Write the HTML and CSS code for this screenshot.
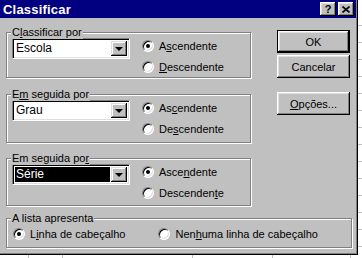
FILE: index.html
```html
<!DOCTYPE html>
<html lang="pt">
<head>
  <meta charset="UTF-8">
  <title>Classificar</title>
  <link rel="stylesheet" href="styles.css">
</head>
<body>
  <div class="dialog">
    <div class="titlebar">
      <span class="title">Classificar</span>
      <div class="title-buttons">
        <span class="tbtn">?</span>
        <span class="tbtn">
          <svg width="8" height="7" viewBox="0 0 8 7"><path d="M0.5 0.5 L7.5 6.5 M7.5 0.5 L0.5 6.5" stroke="#000" stroke-width="1.6" fill="none"/></svg>
        </span>
      </div>
    </div>

    <div class="content">
      <div class="left">
        <div class="group g1">
          <span class="legend">C<u>l</u>assificar por</span>
          <div class="combo"><span class="value">Escola</span><span class="drop"></span></div>
          <div class="radios">
            <label class="opt"><span class="radio checked"></span><span>A<u>s</u>cendente</span></label>
            <label class="opt"><span class="radio"></span><span><u>D</u>escendente</span></label>
          </div>
        </div>

        <div class="group g2">
          <span class="legend">E<u>m</u> seguida por</span>
          <div class="combo"><span class="value">Grau</span><span class="drop"></span></div>
          <div class="radios">
            <label class="opt"><span class="radio checked"></span><span>As<u>c</u>endente</span></label>
            <label class="opt"><span class="radio"></span><span>De<u>s</u>cendente</span></label>
          </div>
        </div>

        <div class="group g3">
          <span class="legend">Em seguida po<u>r</u></span>
          <div class="combo"><span class="value selected">Série</span><span class="drop"></span></div>
          <div class="radios">
            <label class="opt"><span class="radio checked"></span><span>Asce<u>n</u>dente</span></label>
            <label class="opt"><span class="radio"></span><span>Descenden<u>t</u>e</span></label>
          </div>
        </div>
      </div>

      <div class="right">
        <button class="btn default">OK</button>
        <button class="btn">Cancelar</button>
        <button class="btn spaced"><u>O</u>pções...</button>
      </div>
    </div>

    <div class="group g4">
      <span class="legend">A lista apresenta</span>
      <label class="opt"><span class="radio checked"></span><span>L<u>i</u>nha de cabeçalho</span></label>
      <label class="opt second"><span class="radio"></span><span>Nen<u>h</u>uma linha de cabeçalho</span></label>
    </div>
  </div>
</body>
</html>
```

FILE: styles.css
```css
* {
  box-sizing: border-box;
}

html, body {
  margin: 0;
  padding: 0;
}

body {
  width: 362px;
  height: 258px;
  overflow: hidden;
  font-family: 'Liberation Sans', Arial, sans-serif;
  font-size: 11px;
  color: #000;
  background-color: #fff;
  background-image:
    linear-gradient(#c0c0c0, #c0c0c0),
    linear-gradient(#c0c0c0, #c0c0c0),
    linear-gradient(#c0c0c0, #c0c0c0),
    linear-gradient(#c0c0c0, #c0c0c0),
    linear-gradient(#c0c0c0, #c0c0c0),
    repeating-linear-gradient(to bottom, transparent 0, transparent 16px, #c0c0c0 16px, #c0c0c0 17px);
  background-size: 1px 10px, 1px 10px, 1px 10px, 1px 10px, 1px 10px, 10px 258px;
  background-position: 28px 250px, 62px 250px, 192px 250px, 272px 250px, 350px 250px, 358px 9px;
  background-repeat: no-repeat;
}

.dialog {
  width: 358px;
  height: 255px;
  background: #c0c0c0;
  border-right: 1px solid #000;
  border-bottom: 1px solid #000;
  box-shadow: inset -1px -1px 0 #808080;
}

.titlebar {
  height: 18px;
  width: 356px;
  background: #000080;
  color: #fff;
  display: flex;
  align-items: center;
  justify-content: space-between;
  padding: 0 2px 0 3px;
}

.title {
  font-weight: bold;
  font-size: 13px;
  letter-spacing: 0.2px;
}

.title-buttons {
  display: flex;
  gap: 2px;
}

.tbtn {
  display: flex;
  align-items: center;
  justify-content: center;
  width: 16px;
  height: 14px;
  background: #c0c0c0;
  color: #000;
  font-weight: bold;
  font-size: 11px;
  line-height: 14px;
  box-shadow: inset -1px -1px #000, inset 1px 1px #fff, inset -2px -2px #808080, inset 2px 2px #dfdfdf;
}

.content {
  display: flex;
  padding: 14px 0 0 6px;
}

.left {
  width: 245px;
}

.group {
  position: relative;
  border: 1px solid #808080;
  box-shadow: 1px 1px 0 #fff, inset 1px 1px 0 #fff;
  display: flex;
  align-items: flex-start;
}

.legend {
  position: absolute;
  top: -8px;
  left: 4px;
  padding: 0 1px;
  background: #c0c0c0;
  line-height: 14px;
  white-space: nowrap;
}

.g1 {
  height: 46px;
}

.g2 {
  height: 49px;
  margin-top: 16px;
}

.g3 {
  height: 48px;
  margin-top: 15px;
}

.combo {
  width: 118px;
  height: 21px;
  margin: 5px 0 0 5px;
  display: flex;
  align-items: center;
  padding: 2px;
  background: #fff;
  border: 1px solid;
  border-color: #808080 #fff #fff #808080;
  box-shadow: inset 1px 1px #000, inset -1px -1px #dfdfdf;
}

.value {
  flex: 1;
  height: 15px;
  line-height: 15px;
  padding-left: 1px;
  font-size: 12px;
  margin-right: 1px;
}

.value.selected {
  background: #000;
  color: #fff;
}

.drop {
  position: relative;
  width: 16px;
  height: 15px;
  background: #c0c0c0;
  box-shadow: inset -1px -1px #000, inset 1px 1px #dfdfdf, inset -2px -2px #808080, inset 2px 2px #fff;
}

.drop::after {
  content: "";
  position: absolute;
  left: 4px;
  top: 6px;
  border-left: 4px solid transparent;
  border-right: 4px solid transparent;
  border-top: 4px solid #000;
}

.radios {
  display: flex;
  flex-direction: column;
  margin: 4px 0 0 12px;
  gap: 3px;
}

.opt {
  display: flex;
  align-items: center;
  height: 18px;
  gap: 5px;
  white-space: nowrap;
}

.radio {
  position: relative;
  flex: none;
  width: 12px;
  height: 12px;
  border-radius: 50%;
  background: #fff;
  border: 1px solid;
  border-color: #808080 #fff #fff #808080;
  box-shadow: inset 1px 1px #000, inset -1px -1px #dfdfdf;
}

.radio.checked::after {
  content: "";
  position: absolute;
  left: 3px;
  top: 3px;
  width: 4px;
  height: 4px;
  border-radius: 50%;
  background: #000;
}

.right {
  display: flex;
  flex-direction: column;
  margin: -2px 0 0 26px;
}

.btn {
  width: 73px;
  height: 23px;
  margin-bottom: 2px;
  padding: 0;
  border: none;
  background: #c0c0c0;
  font-family: 'Liberation Sans', Arial, sans-serif;
  font-size: 11px;
  color: #000;
  box-shadow: inset -1px -1px #000, inset 1px 1px #fff, inset -2px -2px #808080, inset 2px 2px #dfdfdf;
}

.btn.default {
  border: 1px solid #000;
}

.btn.spaced {
  margin-top: 12px;
}

.g4 {
  width: 346px;
  height: 30px;
  margin: 12px 0 0 6px;
  align-items: center;
  padding: 2px 0 0 6px;
}

.opt.second {
  margin-left: 33px;
}
```
